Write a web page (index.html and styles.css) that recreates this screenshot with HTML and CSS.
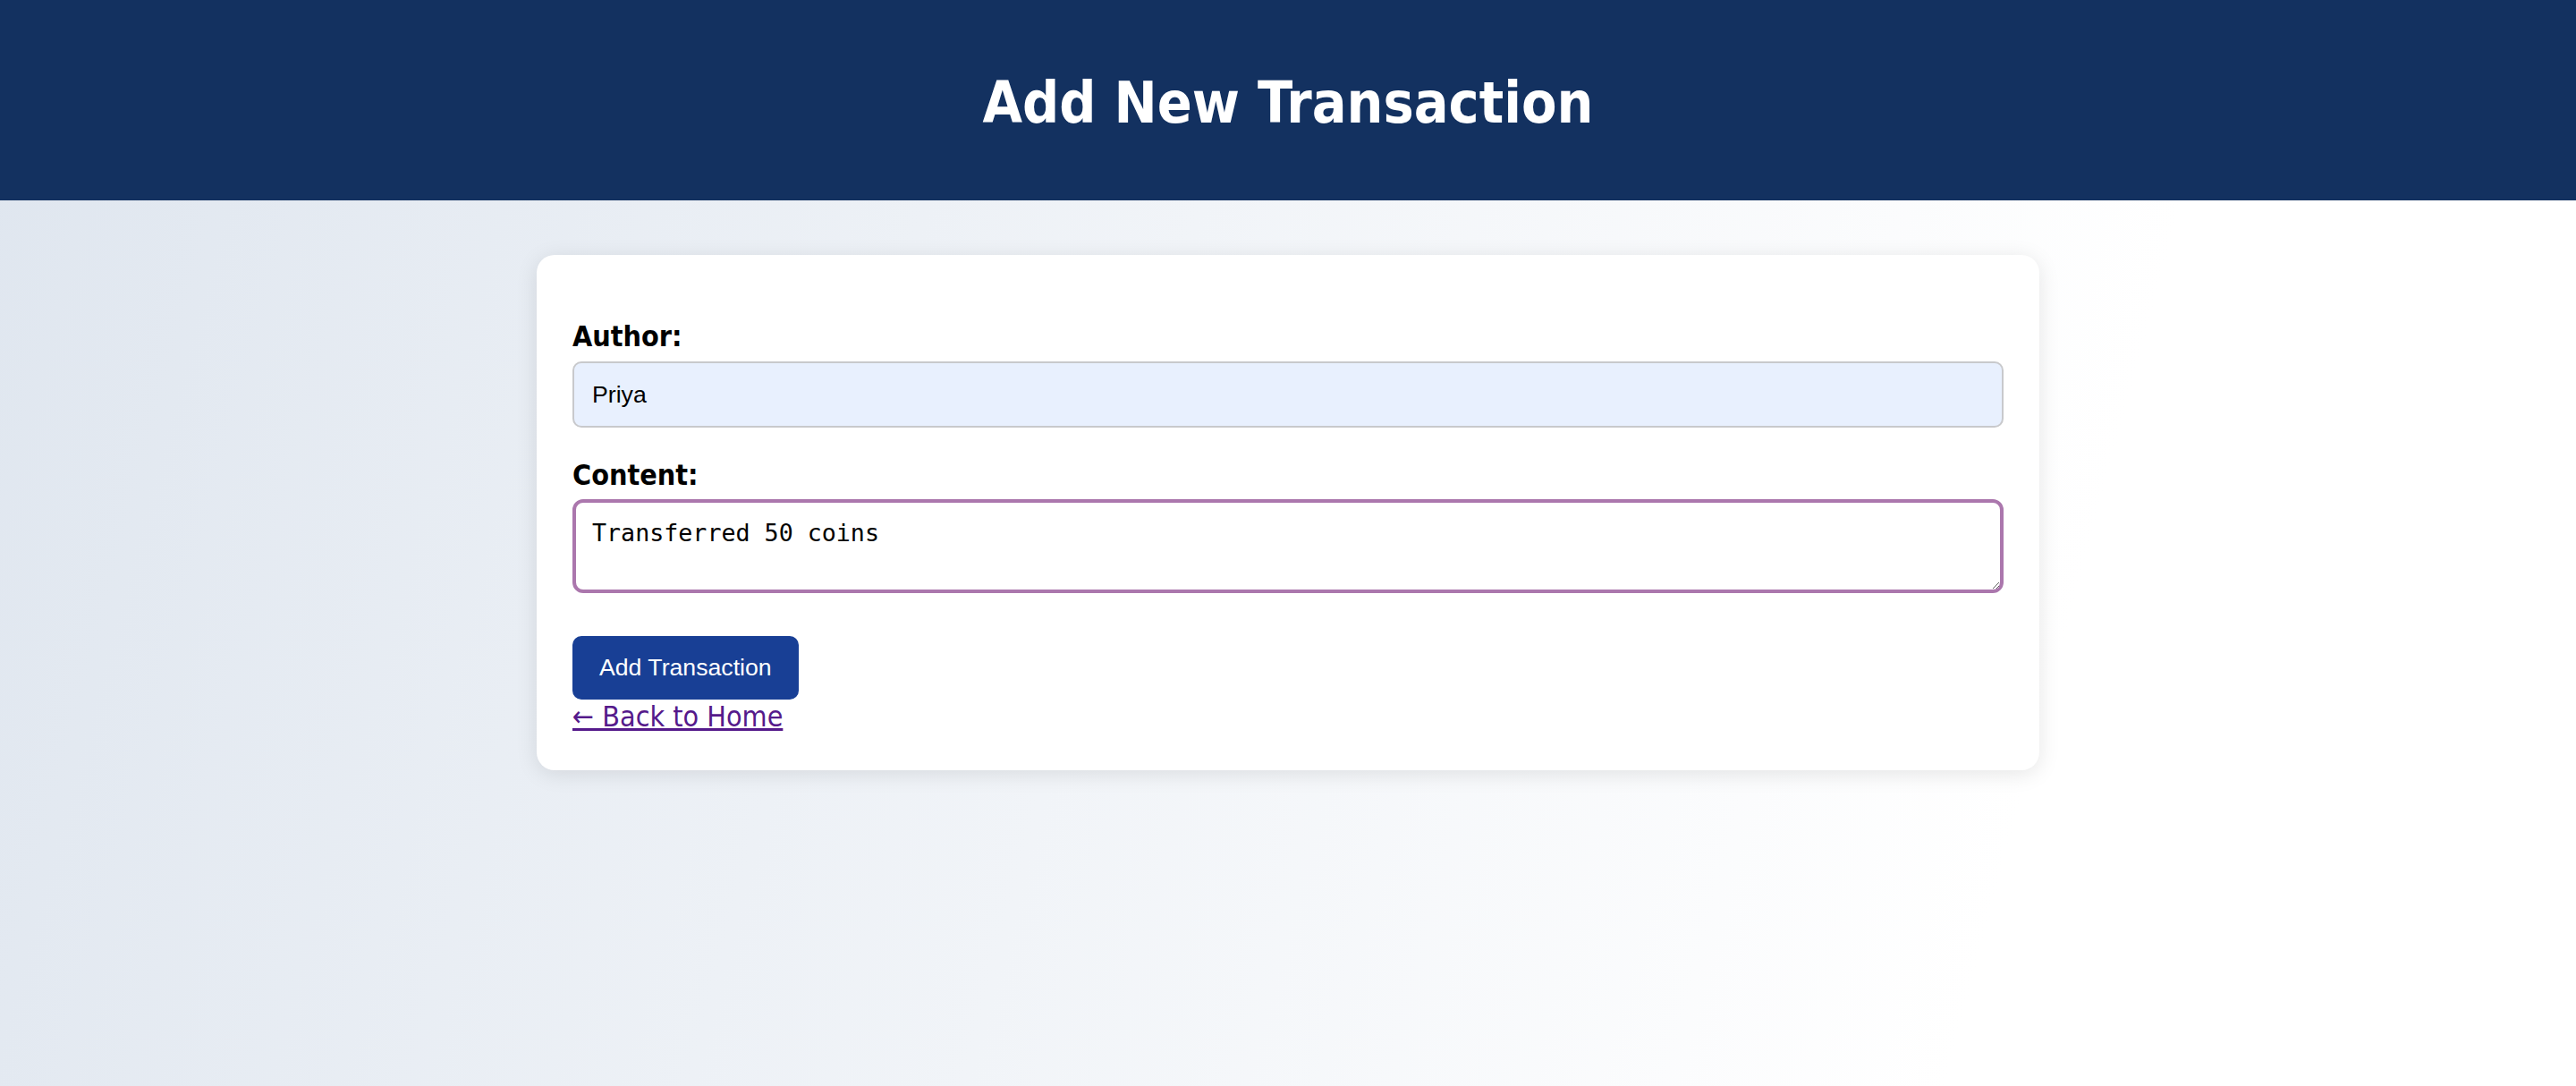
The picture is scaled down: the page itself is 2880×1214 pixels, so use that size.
FILE: index.html
```html
<!DOCTYPE html>
<html lang="en">
<head>
<meta charset="utf-8">
<title>Add New Transaction</title>
<link rel="stylesheet" href="styles.css">
</head>
<body>
<header class="topbar">
  <h1 class="title">Add New Transaction</h1>
</header>
<main class="container">
  <form class="card">
    <label class="field-label label-author" for="author">Author:</label>
    <input id="author" class="text-input" type="text" value="Priya">
    <label class="field-label label-content" for="content">Content:</label>
    <textarea id="content" class="text-area" rows="2">Transferred 50 coins</textarea>
    <button class="submit-btn" type="button">Add Transaction</button>
    <a class="back-link" href="#">← Back to Home</a>
  </form>
</main>
</body>
</html>
```
FILE: styles.css
```css
html, body {
  margin: 0;
  padding: 0;
}

body {
  min-height: 100vh;
  background: linear-gradient(105deg, #dfe6ef 0%, #ffffff 78%);
  font-family: "DejaVu Sans Condensed", "DejaVu Sans", sans-serif;
  font-stretch: condensed;
  color: #000;
}

.topbar {
  background: #133160;
  padding: 76px 0 70px;
  text-align: center;
}

.title {
  margin: 0;
  color: #ffffff;
  font-size: 64px;
  line-height: 78px;
  font-weight: bold;
}

.container {
  width: 1680px;
  margin: 61px auto 0;
}

.card {
  background: #ffffff;
  border-radius: 20px;
  box-shadow: 0 4px 24px rgba(0, 0, 0, 0.1);
  padding: 72px 40px 41px;
  display: flex;
  flex-direction: column;
  align-items: flex-start;
}

.field-label {
  font-size: 32px;
  line-height: 38px;
  font-weight: bold;
  margin: 0 0 9px;
}

.label-content {
  margin: 34px 0 8px;
}

.text-input {
  align-self: stretch;
  box-sizing: border-box;
  height: 74px;
  margin: 0;
  padding: 0 20px;
  border: 2px solid #c8c9cc;
  border-radius: 10px;
  background: #e8f0fe;
  font-family: "Liberation Sans", Arial, sans-serif;
  font-size: 26.67px;
  color: #000;
  outline: none;
}

.text-area {
  align-self: stretch;
  box-sizing: border-box;
  height: 105px;
  margin: 0;
  padding: 18px;
  border: 4px solid #ab77ad;
  border-radius: 12px;
  background: #ffffff;
  font-family: "DejaVu Sans Mono", monospace;
  font-size: 26.67px;
  color: #000;
  outline: none;
}

.submit-btn {
  margin: 48px 0 0;
  padding: 20px 30px;
  border: none;
  border-radius: 10px;
  background: #183f95;
  color: #ffffff;
  font-family: "Liberation Sans", Arial, sans-serif;
  font-size: 26.67px;
  line-height: 31px;
  cursor: pointer;
}

.back-link {
  font-size: 32px;
  line-height: 38px;
  color: #551a8b;
  text-decoration: underline;
}
```
